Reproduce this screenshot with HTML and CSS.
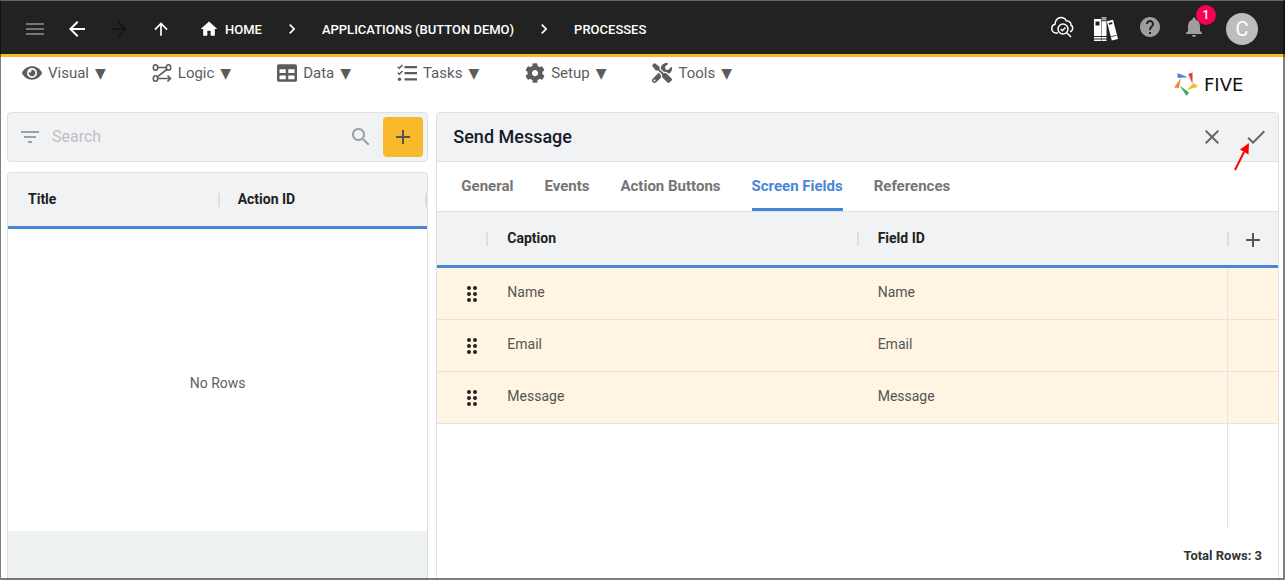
FILE: index.html
```html
<!DOCTYPE html>
<html lang="en">
  <head>
    <meta charset="utf-8">
    <title>Five - Processes</title>
    <link rel="stylesheet" href="styles.css">
  </head>
  <body>
    <header class="topbar">
      <div class="topbar-nav">
        <button class="icon-btn muted" aria-label="Menu"><svg class="icon" viewBox="0 0 24 24"><path d="M3 18h18v-2H3v2zm0-5h18v-2H3v2zm0-7v2h18V6H3z"/></svg></button>
        <button class="icon-btn" aria-label="Back"><svg class="icon" viewBox="0 0 24 24"><path d="M20 11H7.8l5.6-5.6L12 4l-8 8 8 8 1.4-1.4L7.8 13H20z"/></svg></button>
        <button class="icon-btn" aria-label="Forward" disabled><svg class="icon" viewBox="0 0 24 24"><path d="M4 11h12.2l-5.6-5.6L12 4l8 8-8 8-1.4-1.4 5.6-5.6H4z"/></svg></button>
        <button class="icon-btn" aria-label="Up"><svg class="icon-sm" viewBox="0 0 24 24"><path d="M11 20V7.8l-5.6 5.6L4 12l8-8 8 8-1.4 1.4L13 7.8V20z"/></svg></button>
      </div>
      <nav class="breadcrumbs">
        <a href="#"><svg class="icon-sm" viewBox="0 0 24 24"><path d="M10 20v-6h4v6h5v-8h3L12 3 2 12h3v8z"/></svg>HOME</a>
        <svg class="icon-sm" viewBox="0 0 24 24"><path d="M10 6 8.6 7.4l4.6 4.6-4.6 4.6L10 18l6-6z"/></svg>
        <a href="#">APPLICATIONS (BUTTON DEMO)</a>
        <svg class="icon-sm" viewBox="0 0 24 24"><path d="M10 6 8.6 7.4l4.6 4.6-4.6 4.6L10 18l6-6z"/></svg>
        <a href="#">PROCESSES</a>
      </nav>
      <div class="topbar-actions">
        <button class="icon-btn raised" aria-label="Inspect">
          <svg class="icon line" viewBox="0 0 24 24">
            <path d="M8 18H6a4.500 4.500 0 0 1-1-8.800C5 5.500 7.500 2.500 11 2.500c2.500 0 4.300 1.200 5.200 3.300 3 .2 4.800 2 4.800 4.200 1.300.8 1.900 2 1.700 3.500-.2 1.700-1.200 2.900-2.700 3.200"/>
            <circle cx="13" cy="14" r="5"/>
            <path d="m16.700 17.700 4.300 4.300M10.700 14l1.700 1.700 3-3.300"/>
          </svg>
        </button>
        <button class="icon-btn" aria-label="Library">
          <svg class="icon" viewBox="0 0 24 24">
            <path fill-rule="evenodd" d="M0 2h7v22H0zM1.500 4.500v4h4v-4zM0 19v1h7v-1zM0 21.500v1h7v-1z"/>
            <path class="book-grey" d="M7.500 0h5v3.500h-5z"/>
            <path fill-rule="evenodd" d="M7.500 4.200h5V24h-5zM7.500 19v1h5v-1zM7.500 21.500v1h5v-1z"/>
            <path fill-rule="evenodd" d="m12.800 4.300 6.200-1.500 5 19.300-6.200 1.500zM14.600 6l.5 1.800 3.400-.8-.5-1.800zM17 19.200l.2.900 5.300-1.300-.2-.9z"/>
          </svg>
        </button>
        <button class="icon-btn raised grey" aria-label="Help"><svg class="icon" viewBox="0 0 24 24"><path d="M12 2C6.480 2 2 6.480 2 12s4.480 10 10 10 10-4.480 10-10S17.520 2 12 2zm1 17h-2v-2h2v2zm2.070-7.750-.9.920C13.450 12.900 13 13.500 13 15h-2v-.5c0-1.100.45-2.100 1.170-2.830l1.240-1.260c.37-.36.590-.86.590-1.410 0-1.100-.9-2-2-2s-2 .9-2 2H8c0-2.210 1.790-4 4-4s4 1.790 4 4c0 .88-.36 1.680-.93 2.250z"/></svg></button>
        <button class="icon-btn raised grey bell" aria-label="Notifications">
          <svg class="icon" viewBox="0 0 24 24"><path d="M12 22c1.100 0 2-.9 2-2h-4c0 1.100.9 2 2 2zm6-6v-5c0-3.070-1.640-5.640-4.500-6.320V4c0-.83-.67-1.500-1.500-1.500s-1.500.67-1.500 1.500v.68C7.630 5.360 6 7.920 6 11v5l-2 2v1h16v-1l-2-2z"/></svg>
          <span class="badge">1</span>
        </button>
        <button class="avatar">C</button>
      </div>
    </header>

    <div class="menubar">
      <nav class="menus">
        <button class="menu">
          <svg class="icon-sm" viewBox="0 0 576 512"><path d="M572.52 241.400C518.290 135.590 410.930 64 288 64S57.680 135.640 3.480 241.410a32.350 32.350 0 0 0 0 29.190C57.710 376.410 165.070 448 288 448s230.320-71.640 284.520-177.410a32.350 32.350 0 0 0 0-29.190zM288 400a144 144 0 1 1 144-144 143.930 143.930 0 0 1-144 144zm0-240a95.310 95.310 0 0 0-25.310 3.790 47.850 47.850 0 0 1-66.900 66.900A95.780 95.780 0 1 0 288 160z"/></svg>
          <span>Visual</span><span class="caret">▼</span>
        </button>
        <button class="menu">
          <svg class="icon-sm flow" viewBox="0 0 20 20">
            <ellipse cx="3.500" cy="4.500" rx="2.200" ry="2.700"/><ellipse cx="16.500" cy="4.500" rx="2.200" ry="2.700"/><ellipse cx="3.500" cy="15.500" rx="2.200" ry="2.700"/>
            <path d="M6 4.500h8M14.800 6.500 5.300 13.800M6 15.500h12M15.500 12.500l3 3-3 3"/>
          </svg>
          <span>Logic</span><span class="caret">▼</span>
        </button>
        <button class="menu">
          <svg class="icon-sm" viewBox="0 0 512 512"><path d="M464 32H48C21.500 32 0 53.500 0 80v352c0 26.500 21.500 48 48 48h416c26.500 0 48-21.500 48-48V80c0-26.500-21.500-48-48-48zM224 416H64v-96h160v96zm0-160H64v-96h160v96zm224 160H288v-96h160v96zm0-160H288v-96h160v96z"/></svg>
          <span>Data</span><span class="caret">▼</span>
        </button>
        <button class="menu">
          <svg class="icon-sm" viewBox="0 0 20 20">
            <path d="M7.500 3H20v2.200H7.500zM7.500 9H20v2.200H7.500zM7.500 15.200H20v2.200H7.500z"/>
            <circle cx="2.500" cy="16.300" r="1.700"/>
            <path class="ticks" d="m.8 3.700 1.500 1.500L5.500 2M.8 9.700l1.500 1.500L5.500 8"/>
          </svg>
          <span>Tasks</span><span class="caret">▼</span>
        </button>
        <button class="menu">
          <svg class="icon-sm" viewBox="0 0 512 512"><path d="M487.400 315.700l-42.600-24.600c4.300-23.200 4.300-47 0-70.200l42.600-24.600c4.900-2.800 7.100-8.600 5.500-14-11.100-35.600-30-67.800-54.700-94.600-3.800-4.100-10-5.100-14.800-2.300L380.800 110c-17.900-15.400-38.500-27.300-60.800-35.100V25.800c0-5.600-3.900-10.500-9.400-11.700-36.700-8.200-74.300-7.800-109.200 0-5.500 1.200-9.400 6.100-9.400 11.700V75c-22.200 7.900-42.800 19.800-60.800 35.100L88.700 85.500c-4.900-2.800-11-1.900-14.800 2.300-24.700 26.700-43.600 58.900-54.700 94.600-1.700 5.400.6 11.200 5.500 14L67.300 221c-4.300 23.200-4.300 47 0 70.200l-42.600 24.600c-4.900 2.800-7.100 8.600-5.500 14 11.100 35.600 30 67.800 54.700 94.600 3.800 4.100 10 5.100 14.800 2.300l42.600-24.600c17.900 15.400 38.500 27.300 60.800 35.100v49.200c0 5.600 3.900 10.500 9.400 11.700 36.700 8.200 74.300 7.800 109.200 0 5.500-1.200 9.400-6.100 9.400-11.700v-49.200c22.200-7.900 42.800-19.800 60.800-35.100l42.600 24.600c4.900 2.800 11 1.900 14.800-2.300 24.700-26.700 43.600-58.900 54.700-94.600 1.500-5.500-.7-11.300-5.600-14.100zM256 336c-44.100 0-80-35.900-80-80s35.900-80 80-80 80 35.900 80 80-35.900 80-80 80z"/></svg>
          <span>Setup</span><span class="caret">▼</span>
        </button>
        <button class="menu">
          <svg class="icon-sm" viewBox="0 0 512 512"><path d="M501.100 395.700L384 278.600c-23.100-23.100-57.600-27.600-85.400-13.900L192 158.100V96L64 0 0 64l96 128h62.100l106.600 106.600c-13.600 27.800-9.200 62.300 13.900 85.400l117.100 117.100c14.600 14.600 38.200 14.600 52.700 0l52.700-52.700c14.500-14.600 14.500-38.200 0-52.700zM331.700 225c28.300 0 54.900 11 74.900 31l19.400 19.400c15.800-6.900 30.800-16.500 43.800-29.500 37.100-37.100 49.700-89.300 37.900-136.700-2.200-9-13.500-12.100-20.100-5.500l-74.400 74.400-67.900-11.300L334 98.900l74.400-74.400c6.600-6.600 3.400-17.900-5.700-20.200-47.400-11.700-99.600.9-136.600 37.900-28.500 28.500-41.900 66.100-41.200 103.600l82.100 82.100c8.100-1.900 16.500-2.900 24.700-2.900zm-103.900 82l-56.700-56.700L18.700 402.800c-25 25-25 65.500 0 90.500s65.500 25 90.500 0l123.600-123.600c-7.600-19.900-9.900-41.600-5-62.700zM64 472c-13.200 0-24-10.800-24-24 0-13.300 10.700-24 24-24s24 10.700 24 24c0 13.200-10.700 24-24 24z"/></svg>
          <span>Tools</span><span class="caret">▼</span>
        </button>
      </nav>
      <div class="logo">
        <svg class="icon" viewBox="0 0 24 24">
          <path fill="#4a86d8" d="M3.500 1 14 5.300 3.500 6z"/>
          <path fill="#e5403c" d="M18.500.5V12L14.200 2z"/>
          <path fill="#f8b92c" d="m20 11 4 3.800-11.500 3.500z"/>
          <path fill="#40aa54" d="m5.500 13.500 9.500 7-2.300 3.500z"/>
          <path fill="#f5813a" d="M7 6 4.800 16 0 15.500z"/>
        </svg>
        <span>FIVE</span>
      </div>
    </div>

    <main class="content">
      <section class="sidebar">
        <div class="search">
          <button class="icon-btn" aria-label="Filter"><svg class="icon" viewBox="0 0 24 24"><path d="M10 18h4v-2h-4v2zM3 6v2h18V6H3zm3 7h12v-2H6v2z"/></svg></button>
          <input type="text" placeholder="Search" aria-label="Search">
          <button class="icon-btn" aria-label="Search"><svg class="icon" viewBox="0 0 24 24"><path d="M15.500 14h-.79l-.28-.27C15.410 12.590 16 11.110 16 9.500 16 5.910 13.090 3 9.500 3S3 5.910 3 9.500 5.910 16 9.500 16c1.610 0 3.090-.59 4.230-1.570l.27.28v.79l5 4.990L20.490 19l-4.990-5zm-6 0C7.010 14 5 11.990 5 9.500S7.010 5 9.500 5 14 7.010 14 9.500 11.990 14 9.500 14z"/></svg></button>
          <button class="add-btn" aria-label="Add"><svg class="icon" viewBox="0 0 24 24"><path d="M19 13h-6v6h-2v-6H5v-2h6V5h2v6h6z"/></svg></button>
        </div>
        <div class="list">
          <table class="grid">
            <thead>
              <tr><th>Title</th><th class="sep sep-end">Action ID</th></tr>
            </thead>
          </table>
          <div class="no-rows">No Rows</div>
          <div class="list-footer"></div>
        </div>
      </section>

      <section class="detail">
        <div class="detail-header">
          <h1>Send Message</h1>
          <button class="icon-btn" aria-label="Cancel"><svg class="icon" viewBox="0 0 24 24"><path d="M19 6.400 17.600 5 12 10.600 6.400 5 5 6.400l5.600 5.600L5 17.600 6.400 19l5.600-5.600 5.600 5.600 1.400-1.400-5.600-5.600z"/></svg></button>
          <button class="icon-btn save" aria-label="Save">
            <svg class="icon" viewBox="0 0 24 24"><path d="M9 16.200 4.800 12l-1.400 1.400L9 19 21 7l-1.400-1.400z"/></svg>
            <svg class="pointer" viewBox="0 0 18 28"><path class="shaft" d="M2 27 11 9"/><path d="M16 0 7 6.500l8.500 5z"/></svg>
          </button>
        </div>
        <nav class="tabs">
          <button>General</button>
          <button>Events</button>
          <button>Action Buttons</button>
          <button class="active">Screen Fields</button>
          <button>References</button>
        </nav>
        <div class="fields">
          <table class="grid">
            <colgroup><col class="col-drag"><col><col><col class="col-add"></colgroup>
            <thead>
              <tr>
                <th></th>
                <th class="sep">Caption</th>
                <th class="sep">Field ID</th>
                <th class="sep add"><button class="icon-btn" aria-label="Add field"><svg class="icon" viewBox="0 0 24 24"><path d="M19 13h-6v6h-2v-6H5v-2h6V5h2v6h6z"/></svg></button></th>
              </tr>
            </thead>
            <tbody>
              <tr>
                <td class="drag"><svg class="icon" viewBox="0 0 24 24"><path d="M11 18a2 2 0 1 1-4 0 2 2 0 0 1 4 0zm0-6a2 2 0 1 1-4 0 2 2 0 0 1 4 0zm0-6a2 2 0 1 1-4 0 2 2 0 0 1 4 0zm6 0a2 2 0 1 1-4 0 2 2 0 0 1 4 0zm0 6a2 2 0 1 1-4 0 2 2 0 0 1 4 0zm0 6a2 2 0 1 1-4 0 2 2 0 0 1 4 0z"/></svg></td>
                <td>Name</td><td>Name</td><td></td>
              </tr>
              <tr>
                <td class="drag"><svg class="icon" viewBox="0 0 24 24"><path d="M11 18a2 2 0 1 1-4 0 2 2 0 0 1 4 0zm0-6a2 2 0 1 1-4 0 2 2 0 0 1 4 0zm0-6a2 2 0 1 1-4 0 2 2 0 0 1 4 0zm6 0a2 2 0 1 1-4 0 2 2 0 0 1 4 0zm0 6a2 2 0 1 1-4 0 2 2 0 0 1 4 0zm0 6a2 2 0 1 1-4 0 2 2 0 0 1 4 0z"/></svg></td>
                <td>Email</td><td>Email</td><td></td>
              </tr>
              <tr>
                <td class="drag"><svg class="icon" viewBox="0 0 24 24"><path d="M11 18a2 2 0 1 1-4 0 2 2 0 0 1 4 0zm0-6a2 2 0 1 1-4 0 2 2 0 0 1 4 0zm0-6a2 2 0 1 1-4 0 2 2 0 0 1 4 0zm6 0a2 2 0 1 1-4 0 2 2 0 0 1 4 0zm0 6a2 2 0 1 1-4 0 2 2 0 0 1 4 0zm0 6a2 2 0 1 1-4 0 2 2 0 0 1 4 0z"/></svg></td>
                <td>Message</td><td>Message</td><td></td>
              </tr>
              <tr class="filler"><td></td><td></td><td></td><td></td></tr>
            </tbody>
          </table>
        </div>
        <div class="total">Total Rows: 3</div>
      </section>
    </main>
  </body>
</html>
```
FILE: styles.css
```css
* { box-sizing: border-box; }

body {
  margin: 0;
  height: 100vh;
  display: flex;
  flex-direction: column;
  overflow: hidden;
  background: #fff;
  color: #212121;
  font-family: Roboto, "Liberation Sans", sans-serif;
  font-size: 14px;
}

/* window frame */
body::after {
  content: "";
  position: fixed;
  inset: 0;
  border: solid rgba(0, 0, 0, 0.5);
  border-width: 1px 2px 2px 1px;
  border-top-color: #666;
  pointer-events: none;
}

button { border: none; background: none; padding: 0; margin: 0; font: inherit; color: inherit; }
svg { display: block; fill: currentColor; flex: none; }
.icon { width: 24px; height: 24px; }
.icon-sm { width: 20px; height: 20px; }
.icon-btn { display: flex; align-items: center; justify-content: center; width: 24px; height: 24px; flex: none; }

/* top bar */
.topbar { display: flex; align-items: center; height: 57px; padding: 4px 27px 0 23px; background: #222; color: #fff; border-bottom: 3px solid #f8b92c; flex: none; }
.topbar-nav { display: flex; gap: 18px; }
.topbar-nav .muted { color: #757575; }
.topbar-nav :disabled { color: #161616; }
.breadcrumbs { display: flex; align-items: center; gap: 20px; margin-left: 26px; font-size: 13px; font-weight: 500; }
.breadcrumbs a { display: flex; align-items: center; gap: 6px; color: #fff; text-decoration: none; }
.topbar-actions { display: flex; align-items: center; gap: 20px; margin-left: auto; }
.raised { margin-bottom: 4px; }
.grey { color: #9e9e9e; }
.line { fill: none; stroke: currentColor; stroke-width: 1.5; }
.book-grey { fill: #9e9e9e; }
.bell { position: relative; }
.badge { position: absolute; top: -10px; left: 14px; width: 20px; height: 20px; border-radius: 50%; background: #f50057; color: #fff; font-size: 12px; font-weight: 500; line-height: 20px; text-align: center; }
.avatar { width: 32px; height: 32px; border-radius: 50%; background: #bdbdbd; color: #fff; font-size: 20px; line-height: 32px; }

/* menus */
.menubar { display: flex; justify-content: space-between; height: 55px; padding: 5px 22px 0; flex: none; }
.menus { display: flex; align-items: flex-start; gap: 46px; }
.menu { display: flex; align-items: center; gap: 6px; height: 22px; color: #5c5c5c; font-size: 15px; }
.caret { font-family: "DejaVu Sans", sans-serif; font-size: 14px; }
.flow, .ticks { fill: none; stroke: currentColor; stroke-width: 1.6; }
.logo { display: flex; align-items: center; gap: 6px; width: 89px; margin-bottom: 6px; color: #111; font-family: "DejaVu Sans", sans-serif; font-size: 18px; }

/* panels */
.content { display: grid; grid-template-columns: 1fr 2fr; gap: 8px; flex: 1; min-height: 0; padding: 0 6px 0 7px; }
.sidebar { display: flex; flex-direction: column; gap: 10px; min-width: 0; }
.search { display: flex; align-items: center; height: 50px; padding: 0 4px 0 10px; border: 1px solid #e0e0e0; border-radius: 4px; background: #f1f2f4; color: #9aa0a6; }
.search input { flex: 1; min-width: 0; margin-left: 10px; padding: 0 0 2px; border: none; outline: none; background: none; font: inherit; font-size: 16px; }
.search input::placeholder { color: #bdbfc2; }
.add-btn { display: flex; align-items: center; justify-content: center; width: 40px; height: 40px; margin-left: 10px; border-radius: 4px; background: #f8b92c; color: #555; }
.list { display: flex; flex-direction: column; flex: 1; border: 1px solid #e0e0e0; border-bottom: none; border-radius: 4px 4px 0 0; overflow: hidden; }
.no-rows { flex: 1; display: flex; align-items: center; justify-content: center; padding-top: 6px; color: #616161; }
.list-footer { height: 49px; background: #eef2f3; }

.detail { display: flex; flex-direction: column; min-width: 0; border: 1px solid #e0e0e0; border-bottom: none; border-radius: 4px 4px 0 0; }
.detail-header { display: flex; align-items: center; gap: 20px; height: 49px; padding: 0 10px 0 16px; background: #f1f2f4; border-bottom: 1px solid #e0e0e0; color: #666; }
.detail-header h1 { flex: 1; margin: 0; padding-bottom: 2px; color: #151a2d; font-size: 18px; font-weight: 500; }
.save { position: relative; }
.pointer { position: absolute; top: 18px; left: -11px; width: 18px; height: 28px; fill: #f00; }
.shaft { stroke: #f00; stroke-width: 2; }

.tabs { display: flex; gap: 31px; height: 50px; padding: 0 24px; border-bottom: 1px solid #e0e0e0; color: #757575; font-size: 15px; font-weight: 700; }
.tabs button { border-bottom: 3px solid transparent; padding-top: 2px; }
.tabs .active { color: #4687d8; border-bottom-color: #4687d8; }

/* tables */
.grid { width: 100%; border-collapse: separate; border-spacing: 0; table-layout: fixed; }
.grid th { height: 56px; padding: 0 20px 2px; background-color: #f1f2f4; border-bottom: 3px solid #4687d8; text-align: left; font-weight: 700; }
.grid .sep { background-image: linear-gradient(#dcdee0, #dcdee0); background-repeat: no-repeat; background-size: 2px 14px; background-position: left center; }
.grid .sep-end { background-image: linear-gradient(#dcdee0, #dcdee0), linear-gradient(#dcdee0, #dcdee0); background-position: left center, right center; }
.fields { flex: 1; min-height: 0; }
.fields .grid { height: 100%; }
.col-drag { width: 49px; }
.col-add { width: 51px; }
.fields th, .fields td { padding: 0 21px 2px; }
.fields .add { padding: 2px 0 0 14px; color: #555; }
.fields td { height: 52px; padding-bottom: 3px; background: #fff5e2; border-bottom: 1px solid #e4e4e4; color: #555; }
.fields td:last-child { border-left: 1px solid #e4e4e4; }
.fields .drag { padding: 0 0 0 23px; color: #222; }
.fields .filler td { height: auto; background: none; border-bottom: none; }
.total { height: 52px; padding: 20px 16px 0; text-align: right; font-size: 13px; font-weight: 700; color: #333; }
```
